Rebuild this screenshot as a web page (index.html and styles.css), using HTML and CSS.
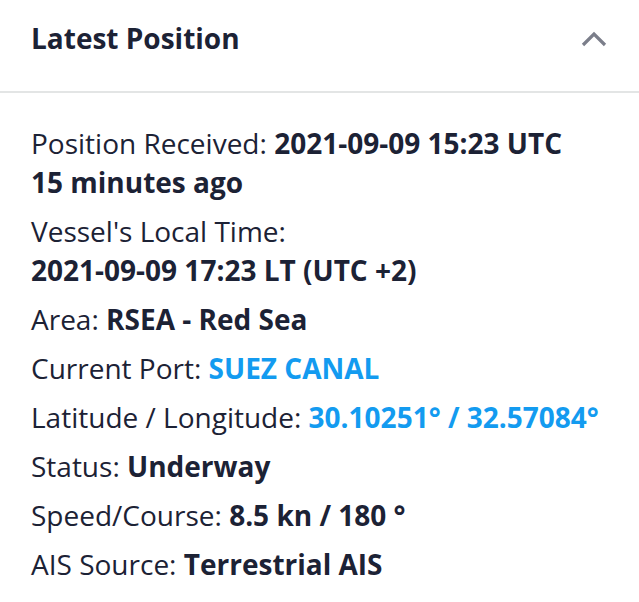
FILE: index.html
```html
<!DOCTYPE html>
<html>
<head>
<meta charset="utf-8">
<link rel="stylesheet" href="styles.css">
</head>
<body>
<div class="panel">
  <div class="panel-header">
    <h2 class="panel-title">Latest Position</h2>
    <svg class="chevron" width="26" height="16" viewBox="0 0 26 16"><path d="M2 14 L13 3 L24 14" fill="none" stroke="#7b7e8a" stroke-width="3.2"/></svg>
  </div>
  <div class="panel-body">
    <div class="item">Position Received: <b>2021-09-09 15:23 UTC</b><br><b>15 minutes ago</b></div>
    <div class="item">Vessel's Local Time:<br><b>2021-09-09 17:23 LT (UTC +2)</b></div>
    <div class="item">Area: <b>RSEA - Red Sea</b></div>
    <div class="item">Current Port: <b class="link">SUEZ CANAL</b></div>
    <div class="item">Latitude / Longitude: <b class="link">30.10251° / 32.57084°</b></div>
    <div class="item">Status: <b>Underway</b></div>
    <div class="item">Speed/Course: <b>8.5 kn / 180 °</b></div>
    <div class="item">AIS Source: <b>Terrestrial AIS</b></div>
  </div>
</div>
</body>
</html>
```
FILE: styles.css
```css
html, body {
  margin: 0;
  padding: 0;
  background: #ffffff;
}
body {
  font-family: "Open Sans", "Liberation Sans", sans-serif;
  color: #1c2235;
}
.panel {
  width: 639px;
}
.panel-header {
  height: 91px;
  display: flex;
  align-items: center;
  justify-content: space-between;
  padding: 0 31px;
  border-bottom: 2px solid #e3e5e5;
  box-sizing: content-box;
}
.panel-title {
  margin: 0;
  font-size: 28px;
  font-weight: 700;
  position: relative;
  top: -8px;
}
.chevron {
  display: block;
  margin-right: 1px;
  position: relative;
  top: -7px;
}
.panel-body {
  padding: 31px 31px 0 31px;
  display: flex;
  flex-direction: column;
  gap: 10px;
}
.item {
  font-size: 28px;
  line-height: 39px;
}
.item b {
  font-weight: 700;
}
.link {
  color: #139bf0;
}
```
